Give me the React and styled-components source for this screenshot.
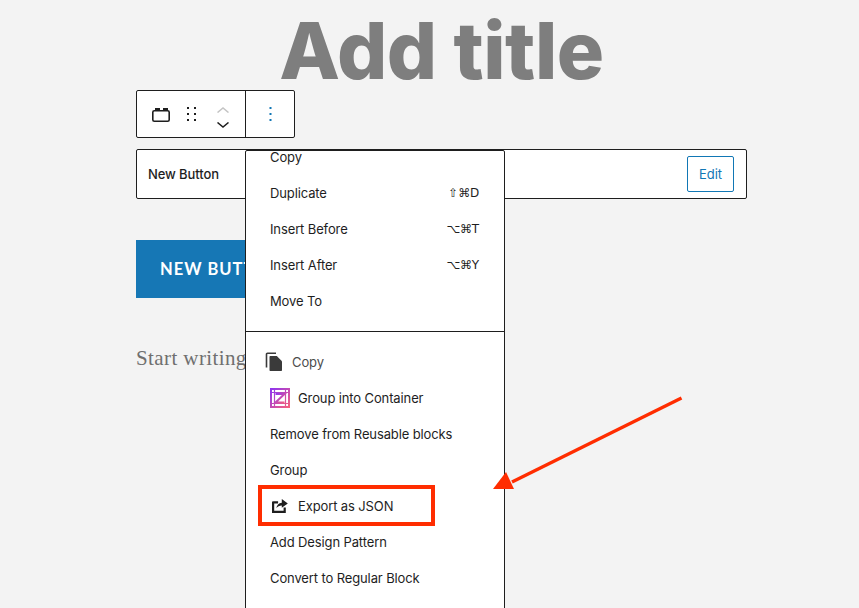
import React from 'react'
import styled, { createGlobalStyle } from 'styled-components'

const Global = createGlobalStyle`
  html, body { margin: 0; padding: 0; background: #f3f3f3; }
  body { font-family: "Inter", "Liberation Sans", sans-serif; }
`

const upperItems = [
  { label: 'Copy' },
  { label: 'Duplicate', keys: '⇧⌘D' },
  { label: 'Insert Before', keys: '⌥⌘T' },
  { label: 'Insert After', keys: '⌥⌘Y' },
  { label: 'Move To' },
]

function CopyIcon() {
  return (
    <svg width="18" height="20" viewBox="0 0 18 20">
      <path d="M1.5 15.5V2.2c0-.6.4-1 1-1h8.5" fill="none" stroke="#3a3a3a" strokeWidth="1.6" />
      <path d="M4.5 5c0-.6.4-1 1-1h6.3L17 9.2V18c0 .6-.4 1-1 1H5.5c-.6 0-1-.4-1-1z" fill="#3a3a3a" />
    </svg>
  )
}

function ContainerIcon() {
  return (
    <svg width="20" height="20" viewBox="0 0 20 20">
      <defs>
        <linearGradient id="cg" x1="0" y1="0" x2="1" y2="1">
          <stop offset="0" stopColor="#8f35ee" />
          <stop offset="1" stopColor="#f5607e" />
        </linearGradient>
      </defs>
      <g fill="none" stroke="url(#cg)">
        <rect x="1" y="1" width="18" height="18" strokeWidth="2" />
        <path d="M4.5 1v18M15.5 1v18M1 4.5h18M1 15.5h18" strokeWidth="1.2" />
        <path d="M5.5 6h9L5.5 14.5h9" strokeWidth="2" />
      </g>
    </svg>
  )
}

function ExportIcon() {
  return (
    <svg width="16" height="14" viewBox="0 0 16 14">
      <path d="M1.1 3.4h5M1.1 2.4v10.5h11.6V8.5" fill="none" stroke="#1e1e1e" strokeWidth="2.2" />
      <path d="M9.8 0l6 4.4-6 4.4V6.5c-2.4 0-4.2.8-5.4 2.8.2-3.2 2.3-5.3 5.4-5.6z" fill="#1e1e1e" />
    </svg>
  )
}

function Chevron({ up, color }) {
  return (
    <svg width="12" height="6" viewBox="0 0 12 6">
      <path d={up ? 'M.5 5.5L6 1l5.5 4.5' : 'M.5.5L6 5l5.5-4.5'} fill="none" stroke={color} strokeWidth="1.5" />
    </svg>
  )
}

function Arrow() {
  return (
    <svg width="205" height="110" viewBox="0 0 205 110">
      <path d="M199.5 10L30 94" stroke="#ff2d00" strokeWidth="3.4" fill="none" />
      <path d="M24 84L11 101h21z" fill="#ff2d00" />
    </svg>
  )
}

export default function App() {
  return (
    <Page>
      <Global />
      <Title>Add title</Title>

      <Toolbar>
        <ToolGroup>
          <BlockIcon>
            <svg width="18" height="14" viewBox="0 0 18 14">
              <path d="M3 0h5v3H3zM11 0h5v3h-5z" fill="#1e1e1e" />
              <rect x="0.8" y="2.8" width="16.4" height="10.4" rx="1.5" fill="none" stroke="#1e1e1e" strokeWidth="1.6" />
            </svg>
          </BlockIcon>
          <DragIcon>
            <svg width="9" height="14" viewBox="0 0 9 14">
              <g fill="#1e1e1e">
                <rect x="0" y="0" width="2" height="2" />
                <rect x="7" y="0" width="2" height="2" />
                <rect x="0" y="6" width="2" height="2" />
                <rect x="7" y="6" width="2" height="2" />
                <rect x="0" y="12" width="2" height="2" />
                <rect x="7" y="12" width="2" height="2" />
              </g>
            </svg>
          </DragIcon>
          <Movers>
            <Chevron up color="#c4c4c4" />
            <Chevron color="#1e1e1e" />
          </Movers>
        </ToolGroup>
        <MoreButton>
          <svg width="3" height="14" viewBox="0 0 3 14">
            <g fill="#1177b5">
              <rect x="0.5" y="0" width="2" height="2" />
              <rect x="0.5" y="6" width="2" height="2" />
              <rect x="0.5" y="12" width="2" height="2" />
            </g>
          </svg>
        </MoreButton>
      </Toolbar>

      <BlockPanel>
        <PanelLabel>New Button</PanelLabel>
        <EditButton>Edit</EditButton>
      </BlockPanel>

      <BigButton>NEW BUTTON</BigButton>
      <Placeholder>Start writing</Placeholder>

      <Menu>
        <MenuScroll>
          <MenuGroup>
            {upperItems.map(item => (
              <MenuItem key={item.label}>
                <span>{item.label}</span>
                {item.keys && <Shortcut>{item.keys}</Shortcut>}
              </MenuItem>
            ))}
          </MenuGroup>
          <MenuGroup $divided>
            <MenuItem $gap={9} $inset={-5} $muted>
              <CopyIcon />
              <span>Copy</span>
            </MenuItem>
            <MenuItem $gap={8}>
              <ContainerIcon />
              <span>Group into Container</span>
            </MenuItem>
            <MenuItem>
              <span>Remove from Reusable blocks</span>
            </MenuItem>
            <MenuItem>
              <span>Group</span>
            </MenuItem>
            <MenuItem $gap={10} $inset={2}>
              <ExportIcon />
              <span>Export as JSON</span>
            </MenuItem>
            <MenuItem>
              <span>Add Design Pattern</span>
            </MenuItem>
            <MenuItem>
              <span>Convert to Regular Block</span>
            </MenuItem>
          </MenuGroup>
        </MenuScroll>
      </Menu>

      <Highlight />
      <ArrowWrap>
        <Arrow />
      </ArrowWrap>
    </Page>
  )
}

const Page = styled.div`
  position: relative;
  box-sizing: border-box;
  width: 859px;
  height: 608px;
  overflow: hidden;
  background: #f3f3f3;
  padding: 0 112px 0 136px;
`

const Title = styled.h1`
  margin: 0;
  height: 90px;
  font-family: "Inter", "Liberation Sans", sans-serif;
  font-size: 79px;
  font-weight: 800;
  line-height: 100px;
  letter-spacing: -0.5px;
  color: #7e7e7e;
  text-align: center;
  white-space: nowrap;
`

const Toolbar = styled.div`
  display: flex;
  box-sizing: border-box;
  width: 159px;
  height: 48px;
  background: #fff;
  border: 1px solid #1e1e1e;
  border-radius: 2px;
`

const ToolGroup = styled.div`
  display: flex;
  align-items: center;
  box-sizing: border-box;
  width: 109px;
  padding-left: 15px;
  border-right: 1px solid #1e1e1e;
`

const BlockIcon = styled.div`
  display: flex;
  width: 18px;
  margin-top: 2px;
`

const DragIcon = styled.div`
  display: flex;
  margin-left: 17px;
`

const Movers = styled.div`
  display: flex;
  flex-direction: column;
  gap: 9px;
  margin: 7px 0 0 21px;
`

const MoreButton = styled.div`
  flex: 1;
  display: flex;
  align-items: center;
  justify-content: center;
`

const BlockPanel = styled.div`
  display: flex;
  align-items: center;
  justify-content: space-between;
  box-sizing: border-box;
  height: 50px;
  margin-top: 11px;
  padding: 0 12px 0 11px;
  background: #fff;
  border: 1px solid #1e1e1e;
  border-radius: 2px;
`

const PanelLabel = styled.div`
  font-size: 13px;
  font-weight: 500;
  letter-spacing: -0.1px;
  color: #1e1e1e;
`

const EditButton = styled.div`
  display: flex;
  align-items: center;
  justify-content: center;
  box-sizing: border-box;
  width: 47px;
  height: 36px;
  border: 1px solid #1177b5;
  border-radius: 2px;
  font-size: 13px;
  color: #1177b5;
`

const BigButton = styled.div`
  box-sizing: border-box;
  width: 110px;
  height: 58px;
  margin-top: 41px;
  padding-left: 24px;
  overflow: hidden;
  background: #1677b5;
  color: #fff;
  font-family: "Lato", "Liberation Sans", sans-serif;
  font-size: 16.5px;
  font-weight: 700;
  letter-spacing: 1px;
  line-height: 58px;
  white-space: nowrap;
`

const Placeholder = styled.p`
  margin: 46px 0 0;
  width: 110px;
  overflow: hidden;
  font-family: "Liberation Serif", serif;
  font-size: 21px;
  letter-spacing: 0.4px;
  line-height: 28px;
  color: #6f6f6f;
  white-space: nowrap;
`

const Menu = styled.div`
  position: absolute;
  left: 245px;
  top: 150px;
  box-sizing: border-box;
  width: 260px;
  height: 470px;
  overflow: hidden;
  background: #fff;
  border: 1px solid #1e1e1e;
  border-radius: 2px;
`

const MenuScroll = styled.div`
  margin-top: -12px;
`

const MenuGroup = styled.div`
  padding: ${p => (p.$divided ? '12px 0' : '0 0 12px')};
  border-top: ${p => (p.$divided ? '1px solid #1e1e1e' : 'none')};
`

const MenuItem = styled.div`
  display: flex;
  align-items: center;
  gap: ${p => p.$gap || 0}px;
  height: 36px;
  padding: 0 25px 0 ${p => 24 + (p.$inset || 0)}px;
  font-size: 13px;
  letter-spacing: -0.12px;
  color: ${p => (p.$muted ? '#4c4c4c' : '#1e1e1e')};
  white-space: nowrap;
`

const Shortcut = styled.span`
  margin-left: auto;
  font-family: "DejaVu Sans", "Inter", sans-serif;
  font-size: 12px;
  letter-spacing: -0.2px;
  color: #1e1e1e;
`

const Highlight = styled.div`
  position: absolute;
  left: 258px;
  top: 485px;
  box-sizing: border-box;
  width: 177px;
  height: 41px;
  border: 4px solid #ff2d00;
`

const ArrowWrap = styled.div`
  position: absolute;
  left: 482px;
  top: 388px;
  display: flex;
`
